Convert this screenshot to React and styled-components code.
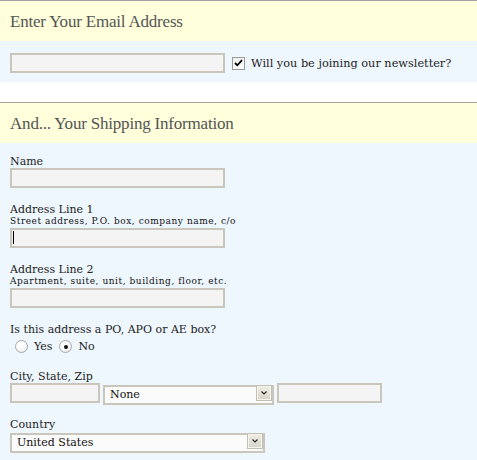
import React from 'react';
import styled, { createGlobalStyle } from 'styled-components';

const Global = createGlobalStyle`
  html, body { margin: 0; padding: 0; background: #ffffff; }
  body {
    width: 477px;
    font-family: "DejaVu Serif", "Liberation Serif", serif;
    color: #222;
  }
  * { box-sizing: border-box; }
`;

const Section = styled.section`
  margin-bottom: ${(p) => p.$gap || 0}px;
`;

const Header = styled.h2`
  margin: 0;
  height: 41px;
  border-top: 1px solid #a3a3a3;
  background: #ffffdc;
  padding: 0 10px;
  font: normal 17px/41px "Liberation Serif", serif;
  letter-spacing: -0.2px;
  color: #555;
`;

const Body = styled.div`
  background: #eef6fe;
  padding: ${(p) => p.$pad};
`;

const Row = styled.div`
  display: flex;
  align-items: center;
  gap: ${(p) => p.$gap || 0}px;
`;

const InputWrap = styled.div`
  position: relative;
  width: ${(p) => p.$w || 215}px;
`;

const TextInput = styled.input`
  display: block;
  width: ${(p) => p.$w || 215}px;
  height: 20px;
  margin: 0;
  padding: 0 3px;
  border: 2px solid #cac6bb;
  background: #f4f4f4;
  font: 11px "DejaVu Serif", serif;
  color: #000;
  caret-color: transparent;
  outline: none;
`;

const Caret = styled.span`
  position: absolute;
  left: 3px;
  top: 3px;
  width: 1px;
  height: 13px;
  background: #000;
`;

const CheckLabel = styled.label`
  display: flex;
  align-items: center;
  margin-left: 7px;
  font-size: 11.3px;
  color: #222;
`;

const Box = styled.span`
  width: 13px;
  height: 13px;
  border: 1px solid #9c9c9c;
  background: linear-gradient(#f0f0f0, #ffffff);
  display: inline-flex;
  align-items: center;
  justify-content: center;
  margin-right: 6px;
`;

const Hidden = styled.input`
  position: absolute;
  opacity: 0;
  width: 0;
  height: 0;
  margin: 0;
`;

const Field = styled.div`
  margin-bottom: 13px;
  &:last-child { margin-bottom: 0; }
`;

const Label = styled.label`
  display: block;
  font-size: 11px;
  line-height: 11px;
  padding-top: 3px;
  margin-bottom: 1px;
  color: #222;
`;

const Hint = styled.div`
  font-size: 9px;
  line-height: 12px;
  letter-spacing: 0.55px;
  margin-top: -1px;
  margin-bottom: 1px;
  color: #111;
`;

const RadioRow = styled.div`
  display: flex;
  align-items: flex-start;
  height: 19px;
  padding: 4px 0 0 5px;
  font-size: 11px;
  line-height: 13px;
`;

const RadioLabel = styled.label`
  display: inline-flex;
  align-items: center;
  margin-right: 7px;
`;

const Radio = styled.span`
  position: relative;
  width: 13px;
  height: 13px;
  border-radius: 50%;
  border: 1px solid #a8a8a8;
  background: radial-gradient(circle at 40% 35%, #ffffff 30%, #e4e4e4 100%);
  margin-right: 6px;
  &::after {
    content: "";
    display: ${(p) => (p.$on ? 'block' : 'none')};
    position: absolute;
    left: 3.5px;
    top: 3.5px;
    width: 4px;
    height: 4px;
    border-radius: 50%;
    background: #111;
  }
`;

const SelectWrap = styled.div`
  position: relative;
  width: ${(p) => p.$w}px;
  height: 20px;
`;

const Select = styled.select`
  appearance: none;
  -webkit-appearance: none;
  width: 100%;
  height: 20px;
  margin: 0;
  padding: 0 0 0 5px;
  border: 2px solid #cac6bb;
  border-radius: 0;
  background: #fbfbfb;
  font: 11px "DejaVu Serif", serif;
  color: #111;
  outline: none;
`;

const Arrow = styled.span`
  position: absolute;
  right: 2px;
  top: 2px;
  width: 16px;
  height: 16px;
  border: 1px solid #c2bfb3;
  box-shadow: inset 0 0 0 1px #f6f5f0;
  background: linear-gradient(#efede6, #d6d3c8);
  display: flex;
  align-items: center;
  justify-content: center;
  pointer-events: none;
`;

function DropArrow() {
  return (
    <Arrow>
      <svg width="6" height="4" viewBox="0 0 6 4">
        <path d="M0.5 0.5 L3 3 L5.5 0.5" fill="none" stroke="#222" strokeWidth="1.1" />
      </svg>
    </Arrow>
  );
}

function Dropdown({ w, value, options }) {
  return (
    <SelectWrap $w={w}>
      <Select defaultValue={value}>
        {options.map((o) => (
          <option key={o}>{o}</option>
        ))}
      </Select>
      <DropArrow />
    </SelectWrap>
  );
}

export default function App() {
  return (
    <>
      <Global />
      <Section $gap={20}>
        <Header>Enter Your Email Address</Header>
        <Body $pad="12px 10px 9px">
          <Row>
            <TextInput type="email" />
            <CheckLabel>
              <Hidden type="checkbox" defaultChecked />
              <Box>
                <svg width="9" height="8" viewBox="0 0 9 8">
                  <path d="M1 4 L3.3 6.3 L8 1.2" fill="none" stroke="#000" strokeWidth="1.8" />
                </svg>
              </Box>
              Will you be joining our newsletter?
            </CheckLabel>
          </Row>
        </Body>
      </Section>
      <Section>
        <Header>And... Your Shipping Information</Header>
        <Body $pad="10px 10px 9px">
          <Field>
            <Label>Name</Label>
            <TextInput />
          </Field>
          <Field>
            <Label>Address Line 1</Label>
            <Hint>Street address, P.O. box, company name, c/o</Hint>
            <InputWrap>
              <TextInput />
              <Caret />
            </InputWrap>
          </Field>
          <Field>
            <Label>Address Line 2</Label>
            <Hint>Apartment, suite, unit, building, floor, etc.</Hint>
            <TextInput />
          </Field>
          <Field>
            <Label>Is this address a PO, APO or AE box?</Label>
            <RadioRow>
              <RadioLabel>
                <Radio />
                Yes
              </RadioLabel>
              <RadioLabel>
                <Radio $on />
                No
              </RadioLabel>
            </RadioRow>
          </Field>
          <Field>
            <Label>City, State, Zip</Label>
            <Row $gap={3}>
              <TextInput $w={90} />
              <Dropdown w={171} value="None" options={['None', 'Alabama', 'Alaska', 'Arizona']} />
              <TextInput $w={105} />
            </Row>
          </Field>
          <Field>
            <Label>Country</Label>
            <Dropdown w={255} value="United States" options={['United States', 'Canada', 'Mexico']} />
          </Field>
        </Body>
      </Section>
    </>
  );
}
